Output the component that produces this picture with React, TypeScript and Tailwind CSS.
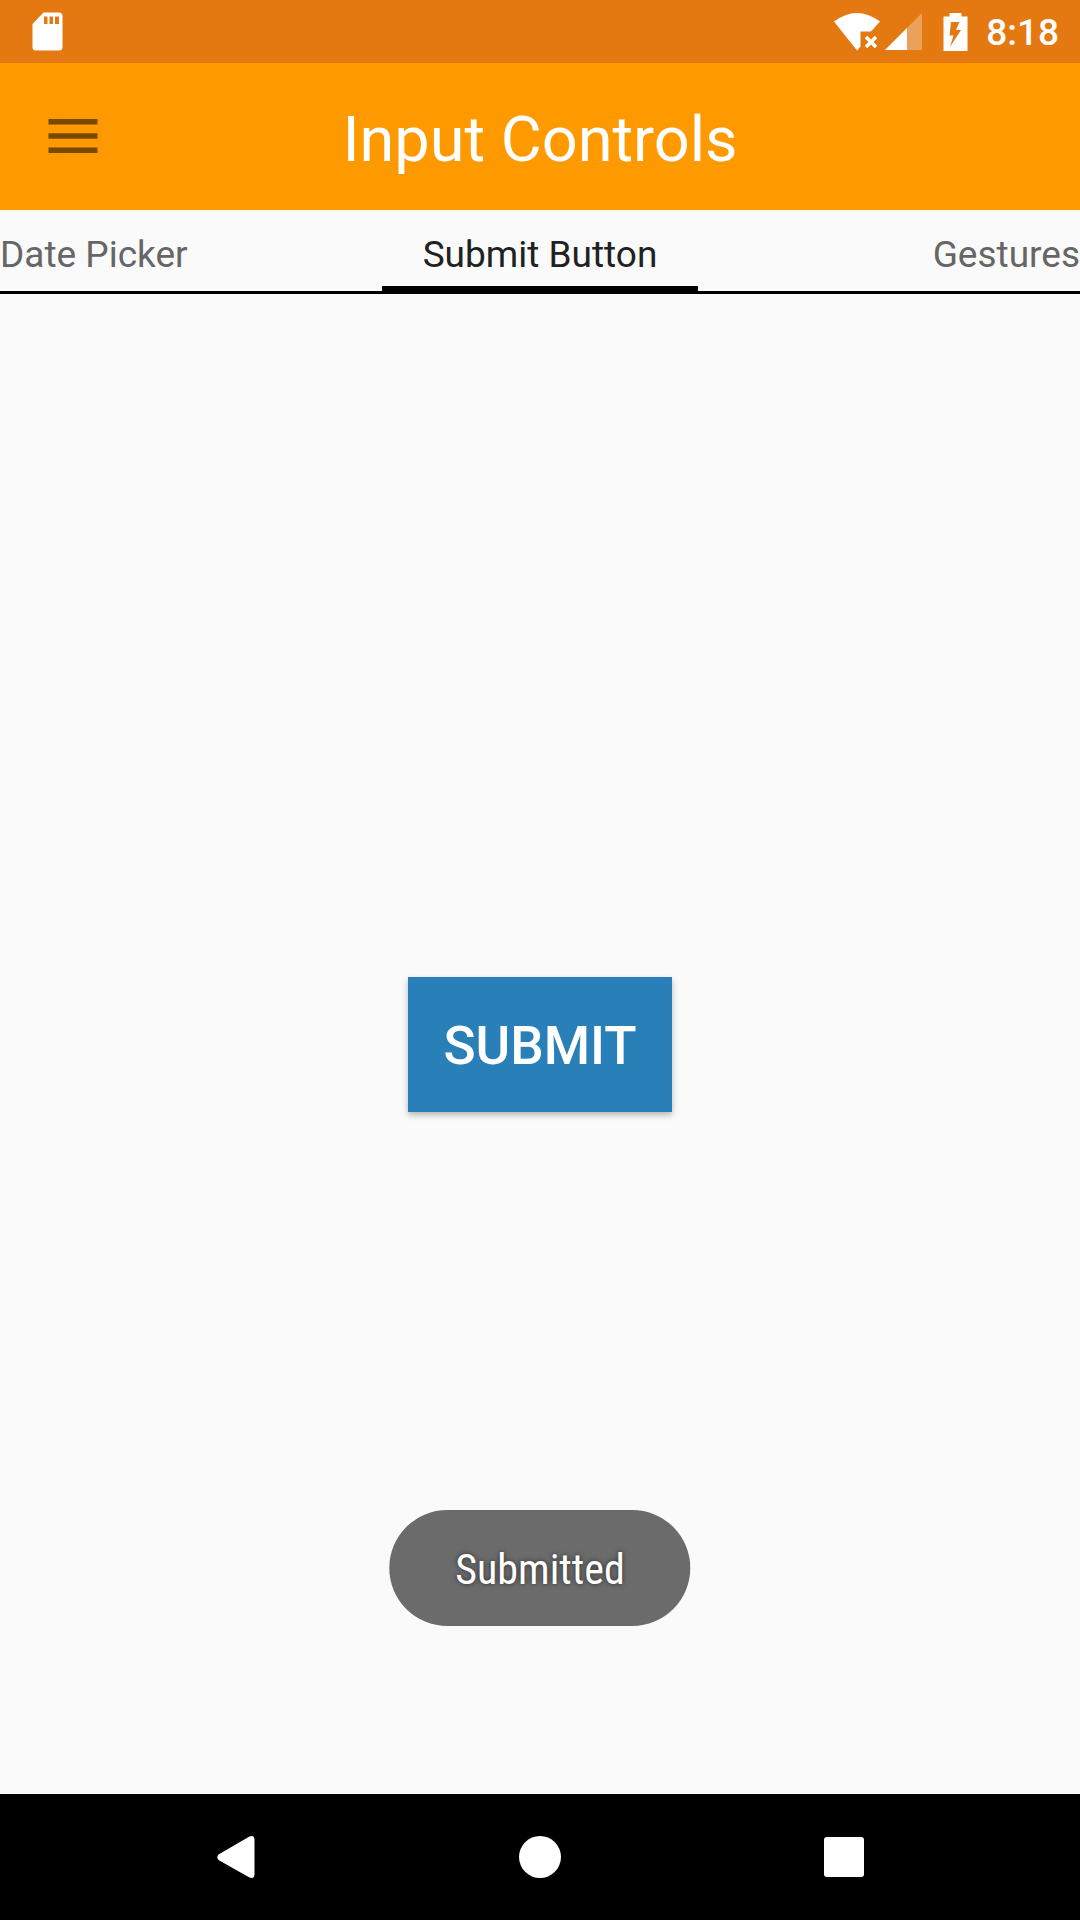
import React from "react";

function StatusBar() {
  return (
    <div className="flex h-[63px] items-center justify-between bg-[#e47911] pr-[21px] pl-8 text-white">
      <svg width="31" height="39" viewBox="0 0 31 39" fill="currentColor" role="img" aria-label="SD card">
        <path
          fillRule="evenodd"
          d="M11.5 0.5H27Q30.5 .5 30.5 4V35Q30.5 38.5 27 38.5H4Q.5 38.5 .5 35V12ZM12 4.5V12H15.5V4.5ZM17.5 4.5V12H21V4.5ZM23 4.5V12H27V4.5Z"
        />
      </svg>
      <div className="flex items-center">
        <svg width="46" height="38" viewBox="0 0 46 38" fill="currentColor" role="img" aria-label="Wi-Fi, no internet">
          <path d="M0 8.500Q23 -8.500 46 8.500L37 18.500H26.500V33.500L23 37.500Z" />
          <path d="M32 24L42 34M42 24L32 34" stroke="currentColor" strokeWidth="3.500" fill="none" />
        </svg>
        <svg className="ml-[5px]" width="37" height="37" viewBox="0 0 37 37" fill="currentColor" role="img" aria-label="Mobile signal">
          <path d="M0 37L37 0V37Z" opacity=".3" />
          <path d="M0 37L22 15V37Z" />
        </svg>
        <svg className="ml-[21px]" width="25" height="38" viewBox="0 0 25 38" fill="currentColor" role="img" aria-label="Battery charging">
          <path
            fillRule="evenodd"
            d="M6.500 0H18.500V3.500H24.500V38H.5V3.500H6.500ZM8 9L6.500 22.500H10.500L7 34L18 17H13L16.500 9Z"
          />
        </svg>
        <time className="ml-[18px] pt-[3px] text-[37px] leading-[44px] font-medium">8:18</time>
      </div>
    </div>
  );
}

function AppBar() {
  return (
    <header className="grid h-[147px] grid-cols-[1fr_auto_1fr] items-center bg-[#ff9900] px-12">
      <button type="button" aria-label="Open menu" className="justify-self-start pb-[2px] text-[#7a4900]">
        <svg width="50" height="34" viewBox="0 0 50 34" fill="currentColor">
          <path d="M.5 0H49.500V5.500H.5ZM.5 14.200H49.500V19.700H.5ZM.5 28.500H49.500V34H.5Z" />
        </svg>
      </button>
      <h1 className="pt-[6px] text-[63px] leading-[74px] text-white">Input Controls</h1>
    </header>
  );
}

function Tabs() {
  return (
    <nav className="grid h-[84px] grid-cols-[1fr_auto_1fr] border-b-[3px] border-black text-[37px] leading-[44px] text-[#666666]">
      <button type="button" className="self-start justify-self-start pt-[23px]">
        Date Picker
      </button>
      <button
        type="button"
        aria-current="page"
        className="flex h-[81px] items-start border-b-[5px] border-black px-[41px] pt-[23px] text-[#212121]"
      >
        Submit Button
      </button>
      <button type="button" className="self-start justify-self-end pt-[23px]">
        Gestures
      </button>
    </nav>
  );
}

function NavigationBar() {
  return (
    <footer className="grid h-[126px] grid-cols-3 bg-black px-[84px] text-white">
      <button type="button" aria-label="Back" className="flex items-center justify-center">
        <svg width="38" height="42" viewBox="0 0 38 42" fill="currentColor">
          <path d="M1.500 18.500L32 .8Q37.500 -1.500 37.500 4V38Q37.500 43.500 32 41.200L1.500 24Q-.8 21.200 1.500 18.500Z" />
        </svg>
      </button>
      <button type="button" aria-label="Home" className="flex items-center justify-center">
        <span className="size-[42px] rounded-full bg-white" />
      </button>
      <button type="button" aria-label="Recent apps" className="flex items-center justify-center">
        <span className="size-10 rounded-[3px] bg-white" />
      </button>
    </footer>
  );
}

export default function App() {
  return (
    <div className="flex min-h-screen flex-col bg-[#fafafa] font-['Roboto',sans-serif]">
      <StatusBar />
      <AppBar />
      <Tabs />
      <main className="relative flex flex-1 items-center justify-center">
        <button
          type="button"
          className="bg-[#2980b9] px-[35px] pt-[38px] pb-[34px] text-[53px] leading-[63px] font-medium text-white shadow-[0_3px_6px_rgba(0,0,0,0.28)]"
        >
          SUBMIT
        </button>
        <div
          role="status"
          className="absolute bottom-[168px] left-1/2 flex h-[116px] -translate-x-1/2 items-center rounded-full bg-[#6b6b6b] px-[66px] pt-[3px] font-['Roboto_Condensed','Roboto',sans-serif] text-[42px] leading-[50px] text-white [text-shadow:0_0_5px_rgba(0,0,0,0.6)]"
        >
          Submitted
        </div>
      </main>
      <NavigationBar />
    </div>
  );
}
